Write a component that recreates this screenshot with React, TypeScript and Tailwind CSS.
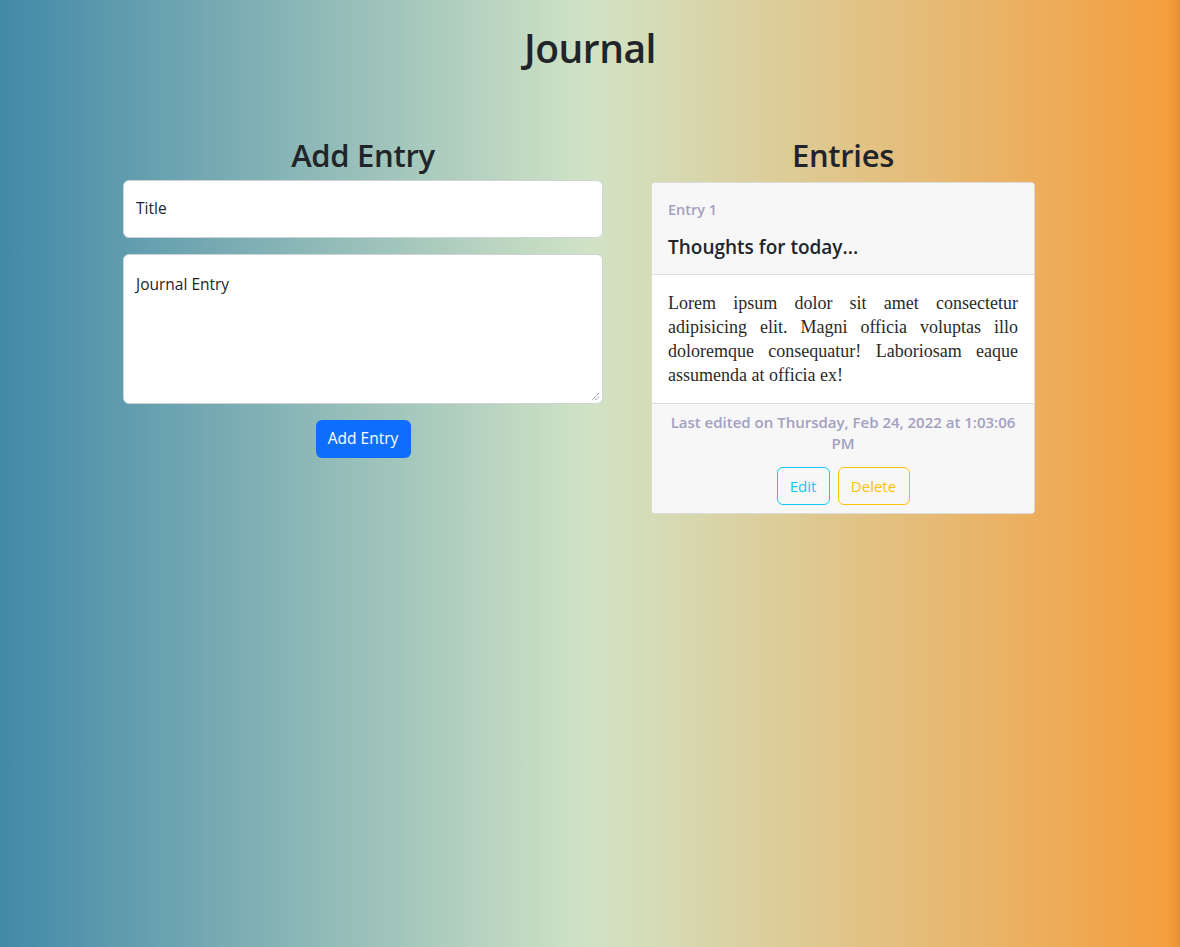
import React from "react";

export default function App() {
  return (
    <div
      className="relative min-h-[947px] w-full overflow-hidden bg-[linear-gradient(to_right,#4289a8_0%,#d1e3c5_50%,#f59d3b_100%)] text-[#212529]"
      style={{ fontFamily: '"Open Sans", "Noto Sans", sans-serif' }}
    >
      <div className="pointer-events-none absolute right-0 top-0 h-full w-[12px] bg-[linear-gradient(to_right,rgba(0,0,0,0),rgba(120,60,0,0.12))]" />
      <h1 className="pt-[25px] text-center text-[39px] font-semibold leading-[1.2] tracking-[-0.5px]">
        Journal
      </h1>
      <div className="ml-[123px] mt-[65px] flex w-[960px]">
        <div className="flex w-[480px] flex-col">
          <h2 className="text-center text-[31px] font-semibold leading-[1.2] tracking-[-0.3px]">
            Add Entry
          </h2>
          <div className="mt-[6px] flex h-[58px] items-center rounded-[6px] border border-[#ced4da] bg-white px-[12px] text-[15.5px]">
            Title
          </div>
          <div className="relative mt-[16px] h-[150px] rounded-[6px] border border-[#ced4da] bg-white px-[12px] pt-[18px] text-[15.5px]">
            Journal Entry
            <svg className="absolute bottom-[2px] right-[2px]" width="9" height="9" viewBox="0 0 9 9">
              <path d="M8 1 L1 8 M8 4.5 L4.5 8" stroke="#555" strokeWidth="1" strokeDasharray="1 1" />
            </svg>
          </div>
          <div className="mt-[16px] flex justify-center">
            <button className="h-[38px] w-[95px] rounded-[6px] bg-[#0d6efd] text-[15.5px] text-white">
              Add Entry
            </button>
          </div>
        </div>
        <div className="flex w-[480px] flex-col items-center">
          <h2 className="text-center text-[31px] font-semibold leading-[1.2] tracking-[-0.3px]">
            Entries
          </h2>
          <div className="mt-[8px] w-[384px] overflow-hidden rounded-[4px] border border-[#dcdcdc] bg-white">
            <div className="border-b border-[#dcdcdc] bg-[#f7f7f7] px-[16px] pb-[15px] pt-[17px]">
              <div className="text-[14.5px] font-semibold leading-[20px] text-[#a3a0c2]">Entry 1</div>
              <div className="mt-[15px] text-[19px] font-semibold leading-[24px] text-[#212529]">
                Thoughts for today...
              </div>
            </div>
            <div
              className="px-[16px] pb-[16px] pt-[16px] text-justify text-[18px] leading-[24px] text-[#2a2a2a]"
              style={{ fontFamily: '"Liberation Serif", "DejaVu Serif", serif' }}
            >
              Lorem ipsum dolor sit amet consectetur adipisicing elit. Magni officia voluptas illo doloremque
              consequatur! Laboriosam eaque assumenda at officia ex!
            </div>
            <div className="border-t border-[#dcdcdc] bg-[#f7f7f7] px-[16px] pb-[8px] pt-[8px] text-center">
              <div className="text-[15px] font-semibold leading-[21px] text-[#a3a0c2]">
                Last edited on Thursday, Feb 24, 2022 at 1:03:06 PM
              </div>
              <div className="mt-[13px] flex justify-center gap-[8px]">
                <button className="h-[38px] w-[53px] rounded-[6px] border border-[#0dcaf0] text-[15px] text-[#0dcaf0]">
                  Edit
                </button>
                <button className="h-[38px] w-[72px] rounded-[6px] border border-[#ffc107] text-[15px] text-[#ffc107]">
                  Delete
                </button>
              </div>
            </div>
          </div>
        </div>
      </div>
    </div>
  );
}
